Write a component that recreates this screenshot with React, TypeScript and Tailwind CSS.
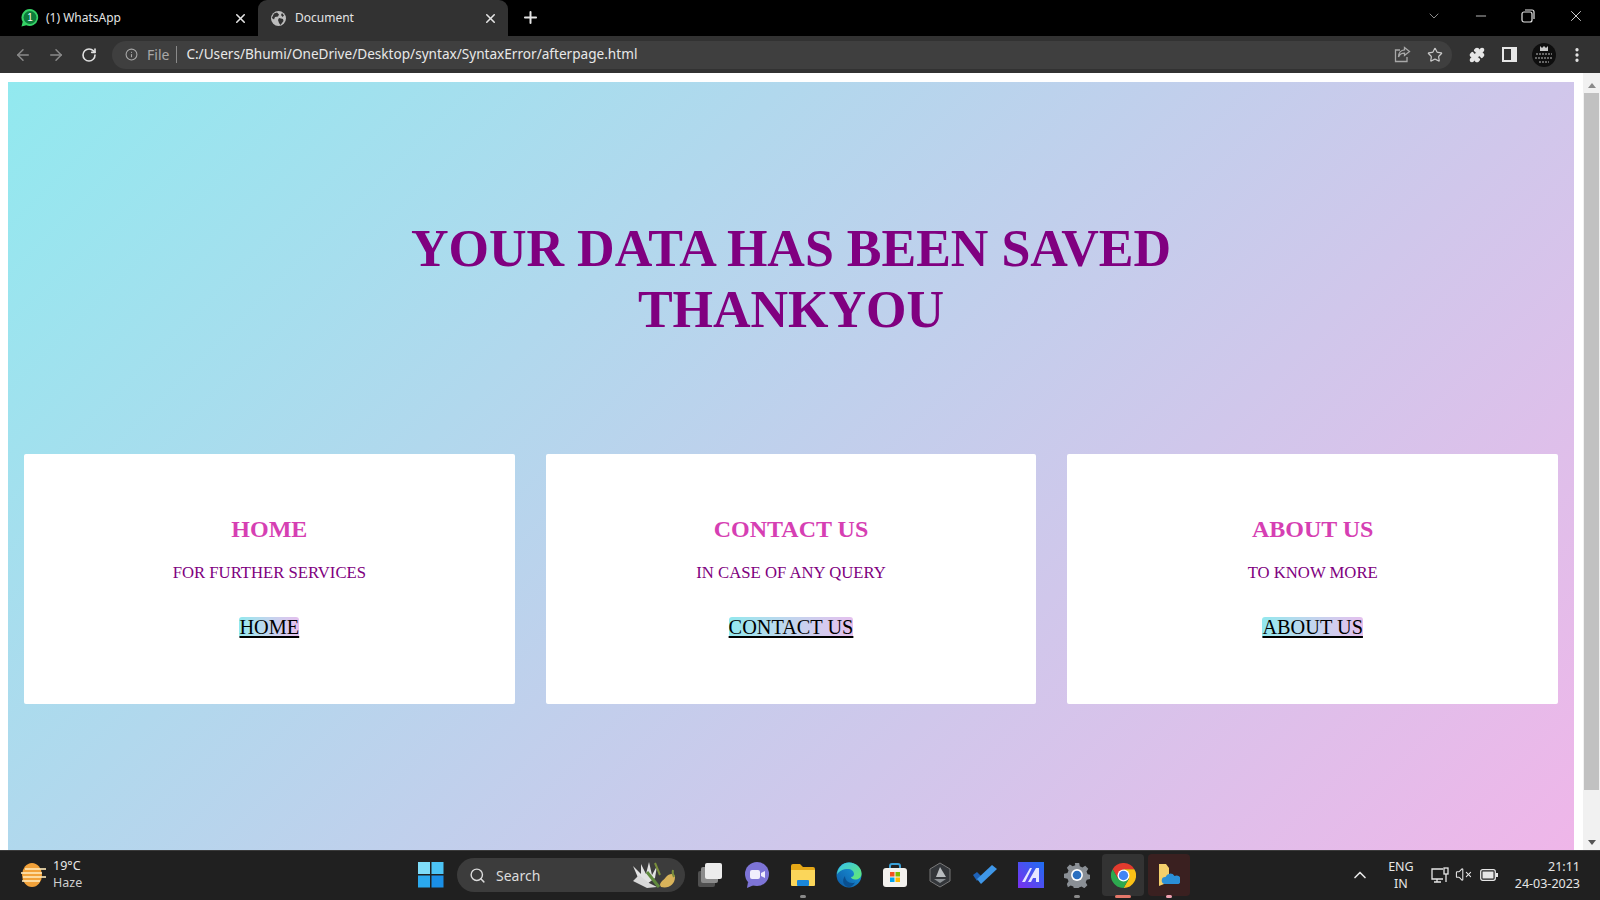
import React from "react";
import { ArrowLeft, ArrowRight, RotateCw, Info, Plus, X, ChevronDown, Minus, Star, Puzzle, EllipsisVertical, Search, ChevronUp, VolumeX } from "lucide-react";

const serif = "font-['Liberation_Serif','Times_New_Roman',serif]";
const ui = "font-['Noto_Sans','Open_Sans',sans-serif]";

function Card({ title, sub, link }: { title: string; sub: string; link: string }) {
  return (
    <div className="flex h-[250px] w-[491px] flex-col items-center rounded-[2px] bg-white">
      <h2 className="mt-[59px] text-[24px] leading-[32px] font-bold text-[#d63fb3]">{title}</h2>
      <p className="mt-[16px] text-[16.7px] leading-[24px] text-[#800080]">{sub}</p>
      <a className="mt-[32px] inline-block h-[21px] rounded-[3px] bg-gradient-to-r from-[#92e8ee] to-[#e4c0ee] text-[20.3px] leading-[21px] text-black underline">{link}</a>
    </div>
  );
}

function Windows() {
  return (
    <svg width="26" height="26" viewBox="0 0 26 26">
      <rect x="0" y="0" width="12" height="12" fill="#7fdcf8" />
      <rect x="13.5" y="0" width="12" height="12" fill="#4cc4f5" />
      <rect x="0" y="13.5" width="12" height="12" fill="#2ba9ee" />
      <rect x="13.5" y="13.5" width="12" height="12" fill="#1a8fe6" />
    </svg>
  );
}

function Taskbar() {
  return (
    <div className={`relative flex h-[50px] items-center justify-between bg-[#202020] border-t border-[#3a3a3a] ${ui}`}>
      <div className="flex items-center pl-[20px]">
        <svg width="26" height="26" viewBox="0 0 26 26" className="-mt-[2px]">
          <ellipse cx="12" cy="13" rx="10" ry="12" fill="#f2a23a" />
          <g stroke="#ffe9b8" strokeWidth="1.6">
            <line x1="5" y1="7" x2="26" y2="7" />
            <line x1="1" y1="11" x2="22" y2="11" />
            <line x1="3" y1="15" x2="26" y2="15" />
            <line x1="2" y1="19" x2="20" y2="19" />
          </g>
        </svg>
        <div className="ml-[7px] -mt-[2px] text-[12.5px] leading-[16.5px] text-[#e8e8e8]">
          <div>19°C</div>
          <div className="text-[#cfcfcf]">Haze</div>
        </div>
      </div>
      <div className="absolute top-[2px] left-[418px] flex h-[44px] items-center">
        <Windows />
        <div className="ml-[13px] flex h-[34px] w-[228px] items-center rounded-full bg-[#3c3c3c] pl-[12px] text-[#dcdcdc]">
          <Search size={17} strokeWidth={2} />
          <span className="ml-[10px] text-[14px]">Search</span>
          <svg className="ml-auto mr-[2px]" width="52" height="30" viewBox="0 0 52 30">
            <path d="M2 6l8 8 0-10 5 10 3-12 3 13 5-9-2 12-8 6-8-4z" fill="#e2e2e2" />
            <path d="M2 21l6-6 10 8 8 4-10 1z" fill="#d8d8d8" />
            <path d="M16 12l12 15" stroke="#5f8a3c" strokeWidth="3" />
            <path d="M30 27c8 2 14-3 14-10 0-4-6-4-9 0-3 4-8 6-5 10z" fill="#d9b35a" />
            <path d="M42 10c-1 3 0 5 1 7M24 3l5 12" stroke="#7a8f3c" strokeWidth="2" fill="none" />
          </svg>
        </div>
        <div className="ml-[13px] flex items-center gap-[20px]">
          <div className="relative h-[24px] w-[26px]">
            <div className="absolute left-0 top-[8px] h-[16px] w-[17px] rounded-[2px] bg-[#505050]" />
            <div className="absolute left-[3px] top-[4px] h-[16px] w-[17px] rounded-[2px] bg-[#8c8c8c]" />
            <div className="absolute left-[7px] top-0 h-[16px] w-[17px] rounded-[2px] bg-[#ececec]" />
          </div>
          <svg width="26" height="26" viewBox="0 0 26 26">
            <circle cx="13" cy="12" r="12" fill="#7d74d6" />
            <path d="M4 20l-1 6 7-3z" fill="#7d74d6" />
            <rect x="6" y="8" width="10" height="9" rx="2" fill="#f0eefc" />
            <path d="M17 11l4-2v7l-4-2z" fill="#f0eefc" />
          </svg>
          <svg width="26" height="24" viewBox="0 0 26 24">
            <path d="M1 3a2 2 0 012-2h7l3 3h10a2 2 0 012 2v3H1z" fill="#e6a817" />
            <path d="M1 7h24v15a1 1 0 01-1 1H2a1 1 0 01-1-1z" fill="#fbd65a" />
            <rect x="7" y="17" width="12" height="6" rx="1" fill="#1a86d9" />
          </svg>
          <svg width="26" height="26" viewBox="0 0 26 26">
            <defs>
              <linearGradient id="e1" x1="0" y1="1" x2="1" y2="0">
                <stop offset="0" stopColor="#0c59a4" />
                <stop offset="1" stopColor="#1b9de2" />
              </linearGradient>
              <linearGradient id="e2" x1="0" y1="0" x2="1" y2="1">
                <stop offset="0" stopColor="#35c1f1" />
                <stop offset="1" stopColor="#66eb6e" />
              </linearGradient>
            </defs>
            <circle cx="13" cy="13" r="12.5" fill="url(#e1)" />
            <path d="M1 12C2 5 7 .5 13 .5c7 0 12.5 5 12.5 11 0 4-3 6-6.5 6-2 0-4-1-4-2.5 2 0 3-1.500 3-3 0-3-3-5-6-5-5 0-9 2-11 5.500z" fill="url(#e2)" />
            <path d="M9 14c0 4 3 7 7 7 1 0 2 0 3-.500-2 3-4 4.500-6 4.500-5 0-8-6-4-11z" fill="#0a4f8f" />
          </svg>
          <svg width="26" height="26" viewBox="0 0 26 26">
            <path d="M8 7V4a2 2 0 012-2h6a2 2 0 012 2v3" stroke="#3aa0d8" strokeWidth="2" fill="none" />
            <rect x="1" y="6" width="24" height="19" rx="3" fill="#f3f1ee" />
            <rect x="8" y="10" width="4.500" height="4.500" fill="#f25022" />
            <rect x="13.500" y="10" width="4.500" height="4.500" fill="#7fba00" />
            <rect x="8" y="15.500" width="4.500" height="4.500" fill="#00a4ef" />
            <rect x="13.500" y="15.500" width="4.500" height="4.500" fill="#ffb900" />
          </svg>
          <svg width="24" height="26" viewBox="0 0 24 26">
            <path d="M12 1l10 6v12l-10 6-10-6V7z" fill="#33363a" stroke="#777" strokeWidth="1" />
            <path d="M12 5l6 10-10 0z" fill="#b9bdc0" />
            <path d="M6 17h12l-6 4z" fill="#8b9094" />
          </svg>
          <svg width="26" height="22" viewBox="0 0 26 22">
            <path d="M1 11l4-3 4 4-4 5z" fill="#1e62b8" />
            <path d="M9 20L5 15 20 1l5 4z" fill="#3f97e8" />
          </svg>
          <svg width="26" height="26" viewBox="0 0 26 26">
            <defs>
              <linearGradient id="m1" x1="0" y1="1" x2="1" y2="0">
                <stop offset="0" stopColor="#7b2ff0" />
                <stop offset="1" stopColor="#1d6ff0" />
              </linearGradient>
            </defs>
            <rect width="26" height="26" fill="url(#m1)" />
            <path d="M4 20L12 6h2L7 20zM10 20L18 6h3v14h-3v-4h-3l-2 4z" fill="#e6e6ff" />
          </svg>
          <svg width="26" height="26" viewBox="0 0 24 24">
            <path d="M10 1h4l.6 3 2.400 1 2.600-1.600 2.800 2.800L20.800 8.800l1 2.400 2.200.6v4l-3 .6-1 2.400 1.600 2.600-2.800 2.800-2.600-1.600-2.400 1-.6 1.400h-4l-.6-2.400-2.400-1-2.600 1.600L2.600 20.400 4.200 17.800l-1-2.400L0 14.800v-4l3.200-.6 1-2.400L2.600 5.200l2.800-2.800L8 4l2.400-1z" fill="#8a8f95" />
            <circle cx="12" cy="12" r="5.500" fill="#fff" />
            <circle cx="12" cy="12" r="4" fill="#2a6fc0" />
          </svg>
          <div className="-ml-[8px] flex h-[42px] w-[42px] items-center justify-center rounded-[4px] bg-[#333333]">
            <svg width="25" height="25" viewBox="0 0 48 48">
              <path d="M3.200 12A24 24 0 0144.800 12H24L13.600 30z" fill="#e33b2e" />
              <path d="M44.800 12A24 24 0 0124 48L34.400 30 24 12z" fill="#fbc116" />
              <path d="M24 48A24 24 0 013.200 12L13.600 30H34.400z" fill="#2da94f" />
              <circle cx="24" cy="24" r="11.500" fill="#fff" />
              <circle cx="24" cy="24" r="9" fill="#4285f4" />
            </svg>
          </div>
          <div className="-ml-[16px] flex h-[42px] w-[42px] items-center justify-center rounded-[4px] bg-[#3a2020]">
            <svg width="22" height="24" viewBox="0 0 22 24">
              <path d="M1 1h7l3 4v14L1 23z" fill="#f4cf6b" />
              <path d="M7 21a3.500 3.500 0 01.500-7 5 5 0 019-1 4 4 0 014 8z" fill="#2a8fd8" />
            </svg>
          </div>
        </div>
      </div>
      <div className="absolute bottom-[2px] left-[800px] h-[3px] w-[6px] rounded-full bg-[#8a8a8a]" />
      <div className="absolute bottom-[2px] left-[1074px] h-[3px] w-[6px] rounded-full bg-[#8a8a8a]" />
      <div className="absolute bottom-[2px] left-[1115px] h-[3px] w-[16px] rounded-full bg-[#e5786a]" />
      <div className="absolute bottom-[2px] left-[1166px] h-[3px] w-[6px] rounded-full bg-[#f0a0b0]" />
      <div className="-mt-[2px] flex items-center pr-[20px] text-[#e6e6e6]">
        <ChevronUp size={20} strokeWidth={2} />
        <div className="ml-[18px] text-center text-[12.5px] leading-[17px]">
          <div>ENG</div>
          <div>IN</div>
        </div>
        <svg className="ml-[17px]" width="18" height="18" viewBox="0 0 18 18" fill="none" stroke="#e6e6e6" strokeWidth="1.300">
          <path d="M12 3H1v10h11M6 13v3M3 16h7" />
          <rect x="13" y="2" width="4" height="6" />
          <path d="M15 8v8" />
        </svg>
        <VolumeX className="ml-[6px]" size={17} strokeWidth={1.5} />
        <svg className="ml-[8px]" width="18" height="12" viewBox="0 0 18 12">
          <rect x=".7" y=".7" width="14.600" height="10.600" rx="2" fill="none" stroke="#e6e6e6" strokeWidth="1.300" />
          <rect x="2.500" y="2.500" width="11" height="7" fill="#e6e6e6" />
          <rect x="16" y="4" width="2" height="4" fill="#e6e6e6" />
        </svg>
        <div className="ml-[17px] text-right text-[12.5px] leading-[17px]">
          <div>21:11</div>
          <div>24-03-2023</div>
        </div>
      </div>
    </div>
  );
}

export default function App() {
  return (
    <div className="flex h-[900px] w-[1600px] flex-col overflow-hidden bg-white">
      <div className={`flex h-[36px] items-end bg-black pl-[8px] text-[#e4e4e4] ${ui}`}>
        <div className="flex h-[36px] w-[250px] items-center pl-[12px] pr-[10px]">
          <svg width="20" height="20" viewBox="0 0 20 20">
            <path d="M10 1a8.500 8.500 0 00-7.300 12.800L1.500 18.500l4.800-1.200A8.500 8.500 0 1010 1z" fill="#35d366" />
            <circle cx="10" cy="9.500" r="6.500" fill="#0d7a3a" />
            <text x="10" y="13" textAnchor="middle" fontSize="10" fill="#fff" fontFamily="Liberation Sans">1</text>
          </svg>
          <span className="ml-[6px] text-[12px]">(1) WhatsApp</span>
          <X className="ml-auto" size={15} strokeWidth={2.5} />
        </div>
        <div className="flex h-[36px] w-[250px] items-center rounded-t-[9px] bg-[#323232] pl-[13px] pr-[10px]">
          <svg width="15" height="15" viewBox="0 0 15 15">
            <circle cx="7.500" cy="7.500" r="7.500" fill="#bdbdbd" />
            <path d="M3 2.500l3-1 2 2-1 2-3 .5-1 2.500L.8 7zM8 7l4 1 .5 2-3 4-1.500-2-1-3zM11 2l2 2.500L11.500 6 10 4z" fill="#323232" />
          </svg>
          <span className="ml-[9px] text-[12px]">Document</span>
          <X className="ml-auto" size={15} strokeWidth={2.5} />
        </div>
        <Plus className="mb-[9px] ml-[13px]" size={19} strokeWidth={2.5} />
        <div className="mb-[11px] ml-auto flex items-center">
          <ChevronDown size={16} strokeWidth={1.2} className="text-[#b0b0b0]" />
          <Minus size={16} strokeWidth={1.2} className="ml-[31px]" />
          <svg className="ml-[32px]" width="14" height="14" viewBox="0 0 14 14" fill="none" stroke="#e4e4e4" strokeWidth="1.200">
            <rect x="1" y="3" width="10" height="10" rx="2" />
            <path d="M4 1h7a2 2 0 012 2v7" />
          </svg>
          <X size={18} strokeWidth={1.2} className="ml-[32px] mr-[15px]" />
        </div>
      </div>
      <div className={`flex h-[37px] items-center bg-[#323232] ${ui}`}>
        <ArrowLeft className="ml-[14px] text-[#8a8a8a]" size={18} strokeWidth={2} />
        <ArrowRight className="ml-[15px] text-[#8a8a8a]" size={18} strokeWidth={2} />
        <RotateCw className="ml-[16px] text-[#e0e0e0]" size={16} strokeWidth={2.4} />
        <div className="ml-[15px] flex h-[28px] w-[1340px] items-center rounded-full bg-[#3f3f3f] pl-[13px] pr-[8px]">
          <Info className="text-[#a8a8a8]" size={13} strokeWidth={2} />
          <span className="ml-[9px] text-[14px] text-[#a8a8a8]">File</span>
          <span className="ml-[7px] h-[17px] w-[1px] bg-[#8a8a8a]" />
          <span className="ml-[9px] text-[13.6px] text-[#e8e8e8]">C:/Users/Bhumi/OneDrive/Desktop/syntax/SyntaxError/afterpage.html</span>
          <svg className="ml-auto" width="17" height="17" viewBox="0 0 17 17" fill="none" stroke="#a8a8a8" strokeWidth="1.300">
            <path d="M6 4H1.500v11.500H13V11" />
            <path d="M10.500 1.500L15.500 5.500 10.500 9.500V7.200C7.500 7.200 5.500 8.500 4.500 11 4.500 7 7 4 10.500 3.800z" />
          </svg>
          <Star className="ml-[16px] mr-[1px] text-[#c8c8c8]" size={16} strokeWidth={1.8} />
        </div>
        <Puzzle className="ml-[17px] fill-[#e6e6e6] text-[#e6e6e6]" size={16} />
        <svg className="ml-[17px]" width="15" height="15" viewBox="0 0 15 15">
          <rect width="15" height="15" fill="#e6e6e6" />
          <rect x="2" y="2" width="7" height="11" fill="#323232" />
        </svg>
        <svg className="ml-[15px]" width="24" height="24" viewBox="0 0 24 24">
          <circle cx="12" cy="12" r="12" fill="#0e0e0e" />
          <path d="M8 8V3l2 2 2-2 2 2 2-2v5z" fill="#c8c8c8" />
          <g stroke="#bdbdbd" strokeWidth="1" strokeDasharray="2 1">
            <line x1="4" y1="11" x2="20" y2="11" />
            <line x1="3" y1="15" x2="21" y2="15" />
            <line x1="7" y1="19" x2="17" y2="19" />
          </g>
        </svg>
        <EllipsisVertical className="ml-[12px] text-[#e6e6e6]" size={18} strokeWidth={2.4} />
      </div>
      <div className="flex h-[777px] bg-white">
        <div className={`mt-[9px] ml-[8px] flex w-[1566px] flex-col bg-[linear-gradient(135deg,#92e9ef,#efb6e9)] ${serif}`}>
          <h1 className="mt-[136px] text-center text-[52px] leading-[61px] font-bold text-[#800080]">
            YOUR DATA HAS BEEN SAVED
            <br />
            THANKYOU
          </h1>
          <div className="mt-[114px] flex gap-[31px] px-[16px]">
            <Card title="HOME" sub="FOR FURTHER SERVICES" link="HOME" />
            <Card title="CONTACT US" sub="IN CASE OF ANY QUERY" link="CONTACT US" />
            <Card title="ABOUT US" sub="TO KNOW MORE" link="ABOUT US" />
          </div>
        </div>
        <div className="ml-[9px] flex w-[17px] flex-col items-center bg-[#f1f1f1]">
          <span className="mt-[10px] h-0 w-0 border-x-[4px] border-b-[5px] border-x-transparent border-b-[#8a8a8a]" />
          <div className="mt-[5px] h-[697px] w-[15px] bg-[#c1c1c1]" />
          <span className="mt-auto mb-[5px] h-0 w-0 border-x-[4px] border-t-[5px] border-x-transparent border-t-[#555]" />
        </div>
      </div>
      <Taskbar />
    </div>
  );
}
